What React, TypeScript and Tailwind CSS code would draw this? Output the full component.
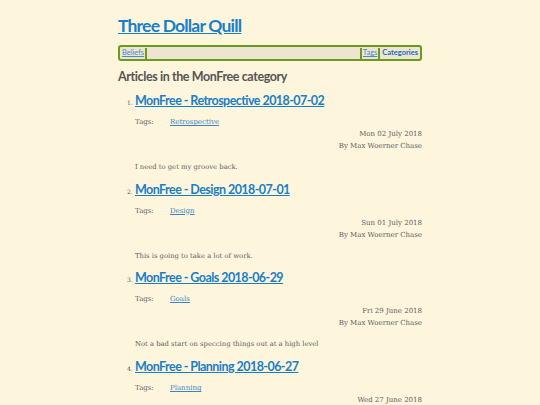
const ARTICLES = [
  { title: "MonFree - Retrospective 2018-07-02", tag: "Retrospective", date: "Mon 02 July 2018", summary: "I need to get my groove back." },
  { title: "MonFree - Design 2018-07-01", tag: "Design", date: "Sun 01 July 2018", summary: "This is going to take a lot of work." },
  { title: "MonFree - Goals 2018-06-29", tag: "Goals", date: "Fri 29 June 2018", summary: "Not a bad start on speccing things out at a high level" },
  { title: "MonFree - Planning 2018-06-27", tag: "Planning", date: "Wed 27 June 2018", summary: "Starting to plan things out." },
];

const heading = { fontFamily: 'Lato, "Noto Sans", sans-serif' };
const body = { fontFamily: '"DejaVu Serif", "Liberation Serif", serif' };

export default function App() {
  return (
    <div className="min-h-[405px] w-full bg-[#fdf5dc]">
      <div className="mx-auto w-[304px] pt-[15px]">
        <h1 className="text-[17.5px] font-bold leading-[22px] tracking-[-0.8px]" style={heading}>
          <a href="#" className="text-[#1a7fc8] underline">Three Dollar Quill</a>
        </h1>
        <nav
          className="mt-[8px] flex h-[16px] items-center rounded-[3px] border-2 border-[#6b9a1e] bg-[#ede5d1] px-[2px] text-[7.5px]"
          style={heading}
        >
          <a href="#" className="text-[#4a8ac8] underline">Beliefs</a>
          <span className="ml-[1px] h-[11px] w-[2px] bg-[#6b9a1e]" />
          <span className="flex-1" />
          <span className="h-[11px] w-[2px] bg-[#6b9a1e]" />
          <a href="#" className="ml-[1px] text-[#4a8ac8] underline">Tags</a>
          <span className="ml-[1px] h-[11px] w-[2px] bg-[#6b9a1e]" />
          <a href="#" className="ml-[2px] font-bold text-[#1a6fb8]">Categories</a>
        </nav>
        <h2 className="mt-[8px] text-[12.5px] font-bold leading-[16px] tracking-[-0.4px] text-[#555]" style={heading}>
          Articles in the MonFree category
        </h2>
        <ol className="mt-[8px]">
          {ARTICLES.map((a, i) => (
            <li key={a.title} className="h-[88.7px] pl-[17px]">
              <div className="flex items-baseline">
                <span className="-ml-[8px] w-[8px] text-[6px] text-[#555]" style={body}>{i + 1}.</span>
                <a href="#" className="text-[12.5px] font-bold leading-[16px] tracking-[-0.55px] text-[#1a7fc8] underline" style={heading}>
                  {a.title}
                </a>
              </div>
              <div className="mt-[8px] flex text-[7px] leading-[10px]" style={body}>
                <span className="w-[35px] text-[#666]">Tags:</span>
                <a href="#" className="text-[#3a85c8] underline">{a.tag}</a>
              </div>
              <div className="mt-[1px] text-right text-[7px] leading-[12px] text-[#5e5e5e]" style={body}>
                <div>{a.date}</div>
                <div>By Max Woerner Chase</div>
              </div>
              <p className="mt-[10px] text-[6.8px] leading-[10px] text-[#5e5e5e]" style={body}>{a.summary}</p>
            </li>
          ))}
        </ol>
      </div>
    </div>
  );
}
